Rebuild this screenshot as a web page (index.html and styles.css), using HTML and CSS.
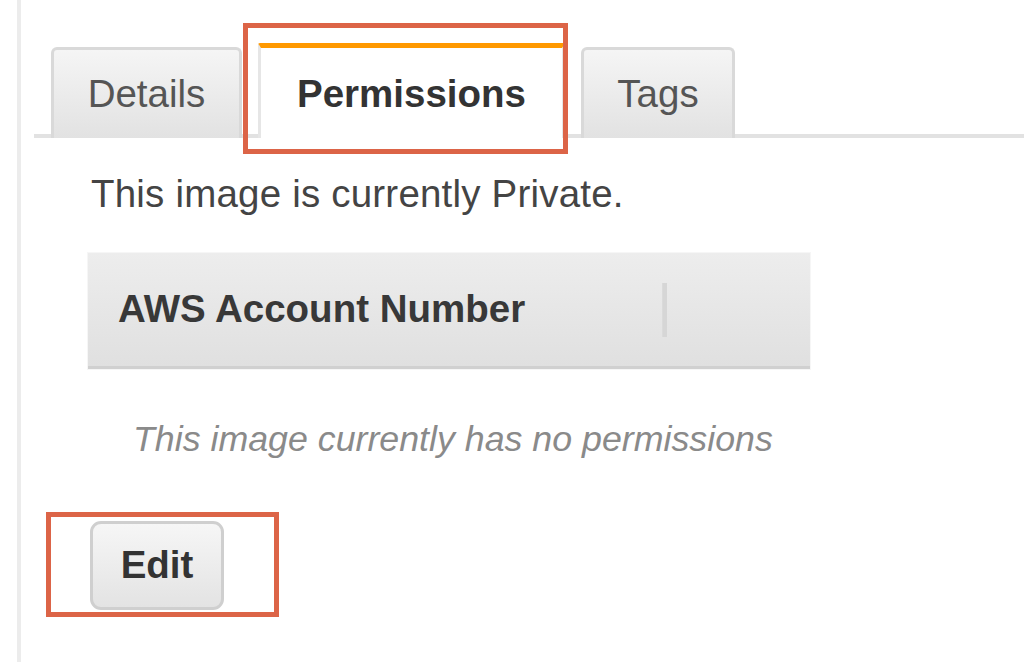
FILE: index.html
```html
<!DOCTYPE html>
<html lang="en">
<head>
<meta charset="utf-8">
<title>Permissions</title>
<link rel="stylesheet" href="styles.css">
</head>
<body>
<div class="frame">
  <div class="tabs">
    <div class="tab">Details</div>
    <div class="tab tab-active">Permissions<span class="highlight highlight-tab"></span></div>
    <div class="tab tab-tags">Tags</div>
  </div>
  <div class="content">
    <p class="status">This image is currently Private.</p>
    <div class="table-head">
      <div class="col-account">AWS Account Number</div>
      <div class="col-sep"></div>
    </div>
    <p class="empty">This image currently has no permissions</p>
    <button class="btn-edit" type="button">Edit<span class="highlight highlight-btn"></span></button>
  </div>
</div>
</body>
</html>
```

FILE: styles.css
```css
* { box-sizing: border-box; }

body {
  margin: 0;
  background: #ffffff;
  font-family: "Liberation Sans", Arial, sans-serif;
  font-size: 38.5px;
  color: #444444;
}

.frame {
  margin-left: 17px;
  border-left: 4px solid #ececec;
  height: 662px;
  padding-left: 13px;
  overflow: hidden;
}

.tabs {
  display: flex;
  align-items: flex-end;
  gap: 16px;
  padding-top: 43px;
  padding-left: 17px;
  border-bottom: 4px solid #e2e2e2;
}

.tab {
  position: relative;
  width: 191px;
  height: 91px;
  margin-bottom: -4px;
  display: flex;
  align-items: center;
  justify-content: center;
  border: 3px solid #d9d9d9;
  border-bottom: none;
  border-radius: 6px 6px 0 0;
  background: linear-gradient(#f5f5f5, #e2e2e2);
  color: #555555;
  line-height: 1;
}

.tab-active {
  width: 307px;
  height: 95px;
  border-color: #e6e6e6;
  border-top: 5px solid #ff9900;
  border-radius: 2px 2px 0 0;
  background: #ffffff;
  color: #333333;
  font-weight: bold;
  padding-top: 2px;
}

.tab-tags {
  width: 154px;
}

.highlight {
  position: absolute;
  border: 5px solid #dc6447;
  pointer-events: none;
}

.highlight-tab {
  left: -18px;
  right: -6px;
  top: -25px;
  bottom: -16px;
}

.content {
  padding-left: 54px;
}

.status {
  margin: 33px 0 0 3px;
  line-height: 46px;
  color: #444444;
  letter-spacing: 0.2px;
}

.table-head {
  margin-top: 36px;
  width: 722px;
  height: 116px;
  display: flex;
  align-items: center;
  background: linear-gradient(#ededed, #e0e0e0);
  border-bottom: 3px solid #d0d0d0;
  box-shadow: 0 0 0 1px #f6f6f6;
}

.col-account {
  width: 574px;
  padding-left: 30px;
  font-weight: bold;
  color: #383838;
  line-height: 1;
}

.col-sep {
  width: 5px;
  height: 54px;
  background: #d6d6d6;
  border-left: 1px solid #dadada;
}

.empty {
  margin: 47px 0 0 45px;
  font-size: 35.75px;
  line-height: 46px;
  font-style: italic;
  color: #8a8a8a;
}

.btn-edit {
  position: relative;
  display: block;
  margin: 59px 0 0 2px;
  width: 134px;
  height: 89px;
  padding: 0;
  border: 3px solid #cfcfcf;
  border-radius: 11px;
  background: linear-gradient(#f6f6f6, #e3e3e3);
  font-family: "Liberation Sans", Arial, sans-serif;
  font-size: 38.5px;
  font-weight: bold;
  color: #333333;
  line-height: 1;
}

.highlight-btn {
  left: -47px;
  right: -58px;
  top: -12px;
  bottom: -10px;
}
```
